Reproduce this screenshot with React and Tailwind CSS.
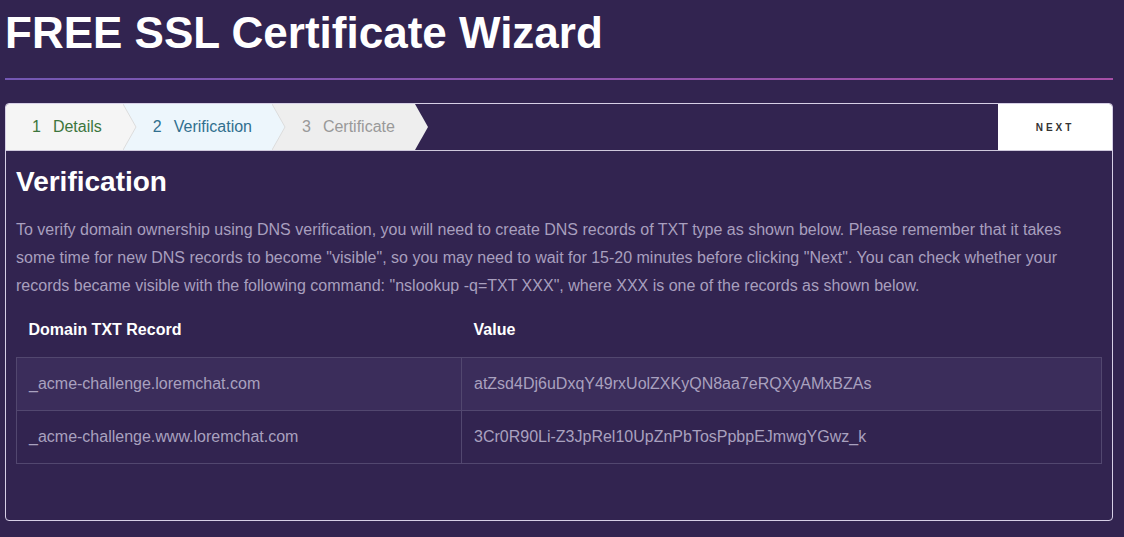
import React from 'react';

const steps = [
  { n: 1, label: 'Details', bg: '#f5f5f5', color: '#3c763d', pl: 'pl-[26px]', pr: 'pr-[21px]' },
  { n: 2, label: 'Verification', bg: '#edf6fc', color: '#31708f', pl: 'pl-[30px]', pr: 'pr-[20px]' },
  { n: 3, label: 'Certificate', bg: '#eeeeee', color: '#999999', pl: 'pl-[30px]', pr: 'pr-[20px]' },
];

const records = [
  { name: '_acme-challenge.loremchat.com', value: 'atZsd4Dj6uDxqY49rxUolZXKyQN8aa7eRQXyAMxBZAs' },
  { name: '_acme-challenge.www.loremchat.com', value: '3Cr0R90Li-Z3JpRel10UpZnPbTosPpbpEJmwgYGwz_k' },
];

const Step = ({ step, last }) => (
  <div
    className={`relative flex items-center h-full ${step.pl} ${step.pr} text-[16px]`}
    style={{ backgroundColor: step.bg, color: step.color, zIndex: 10 - step.n }}
  >
    <span>{step.n}</span>
    <span className="ml-[12px]">{step.label}</span>
    <svg className="absolute top-0 right-[-14px] h-full w-[14px]" viewBox="0 0 14 46" preserveAspectRatio="none">
      <polygon points="0,0 13,23 0,46" fill={step.bg} />
      {!last && <polyline points="0,0 13,23 0,46" fill="none" stroke="#dcdcdc" strokeWidth="1" />}
    </svg>
  </div>
);

const App = () => {
  return (
    <div className="min-h-[537px] bg-[#322450] font-['Liberation_Sans',Arial,sans-serif] pt-[7px] pb-[16px]">
      <h1 className="pl-[5px] text-[44px] leading-[52px] font-bold text-white">FREE SSL Certificate Wizard</h1>
      <div className="ml-[5px] mr-[11px] mt-[19px] h-[2px] bg-gradient-to-r from-[#7357b3] to-[#a64fa6]" />

      <div className="ml-[5px] mr-[11px] mt-[23px] h-[418px] border border-[#d6cfe6] rounded-[4px] overflow-hidden">
        <div className="flex h-[47px] border-b border-[#cfc8dc]">
          <div className="flex h-full">
            {steps.map((s, i) => (
              <Step key={s.n} step={s} last={i === steps.length - 1} />
            ))}
          </div>
          <div className="flex-1" />
          <button className="w-[114px] h-full bg-white text-[10px] font-bold tracking-[3px] text-[#333]">NEXT</button>
        </div>

        <div className="px-[10px]">
          <h2 className="mt-[15px] text-[28px] leading-[32px] font-bold text-white">Verification</h2>
          <p className="mt-[18px] text-[16px] leading-[28px] text-[#a89fbe]">
            To verify domain ownership using DNS verification, you will need to create DNS records of TXT type as shown below. Please remember that it takes some time for new DNS records to become "visible", so you may need to wait for 15-20 minutes before clicking "Next". You can check whether your records became visible with the following command: "nslookup -q=TXT XXX", where XXX is one of the records as shown below.
          </p>

          <table className="mt-[3px] w-[1086px] border-collapse text-[16px]">
            <thead>
              <tr className="h-[54px]">
                <th className="w-[445px] pl-[12px] text-left font-bold text-white">Domain TXT Record</th>
                <th className="pl-[12px] text-left font-bold text-white">Value</th>
              </tr>
            </thead>
            <tbody>
              {records.map((r, i) => (
                <tr key={r.name} className={`h-[53px] ${i === 0 ? 'bg-[#3b2d5b]' : ''}`}>
                  <td className="pl-[12px] border border-[#52476f] text-[#a9a1bf]">{r.name}</td>
                  <td className="pl-[12px] border border-[#52476f] text-[#a9a1bf]">{r.value}</td>
                </tr>
              ))}
            </tbody>
          </table>
        </div>
      </div>
    </div>
  );
};

export default App;
